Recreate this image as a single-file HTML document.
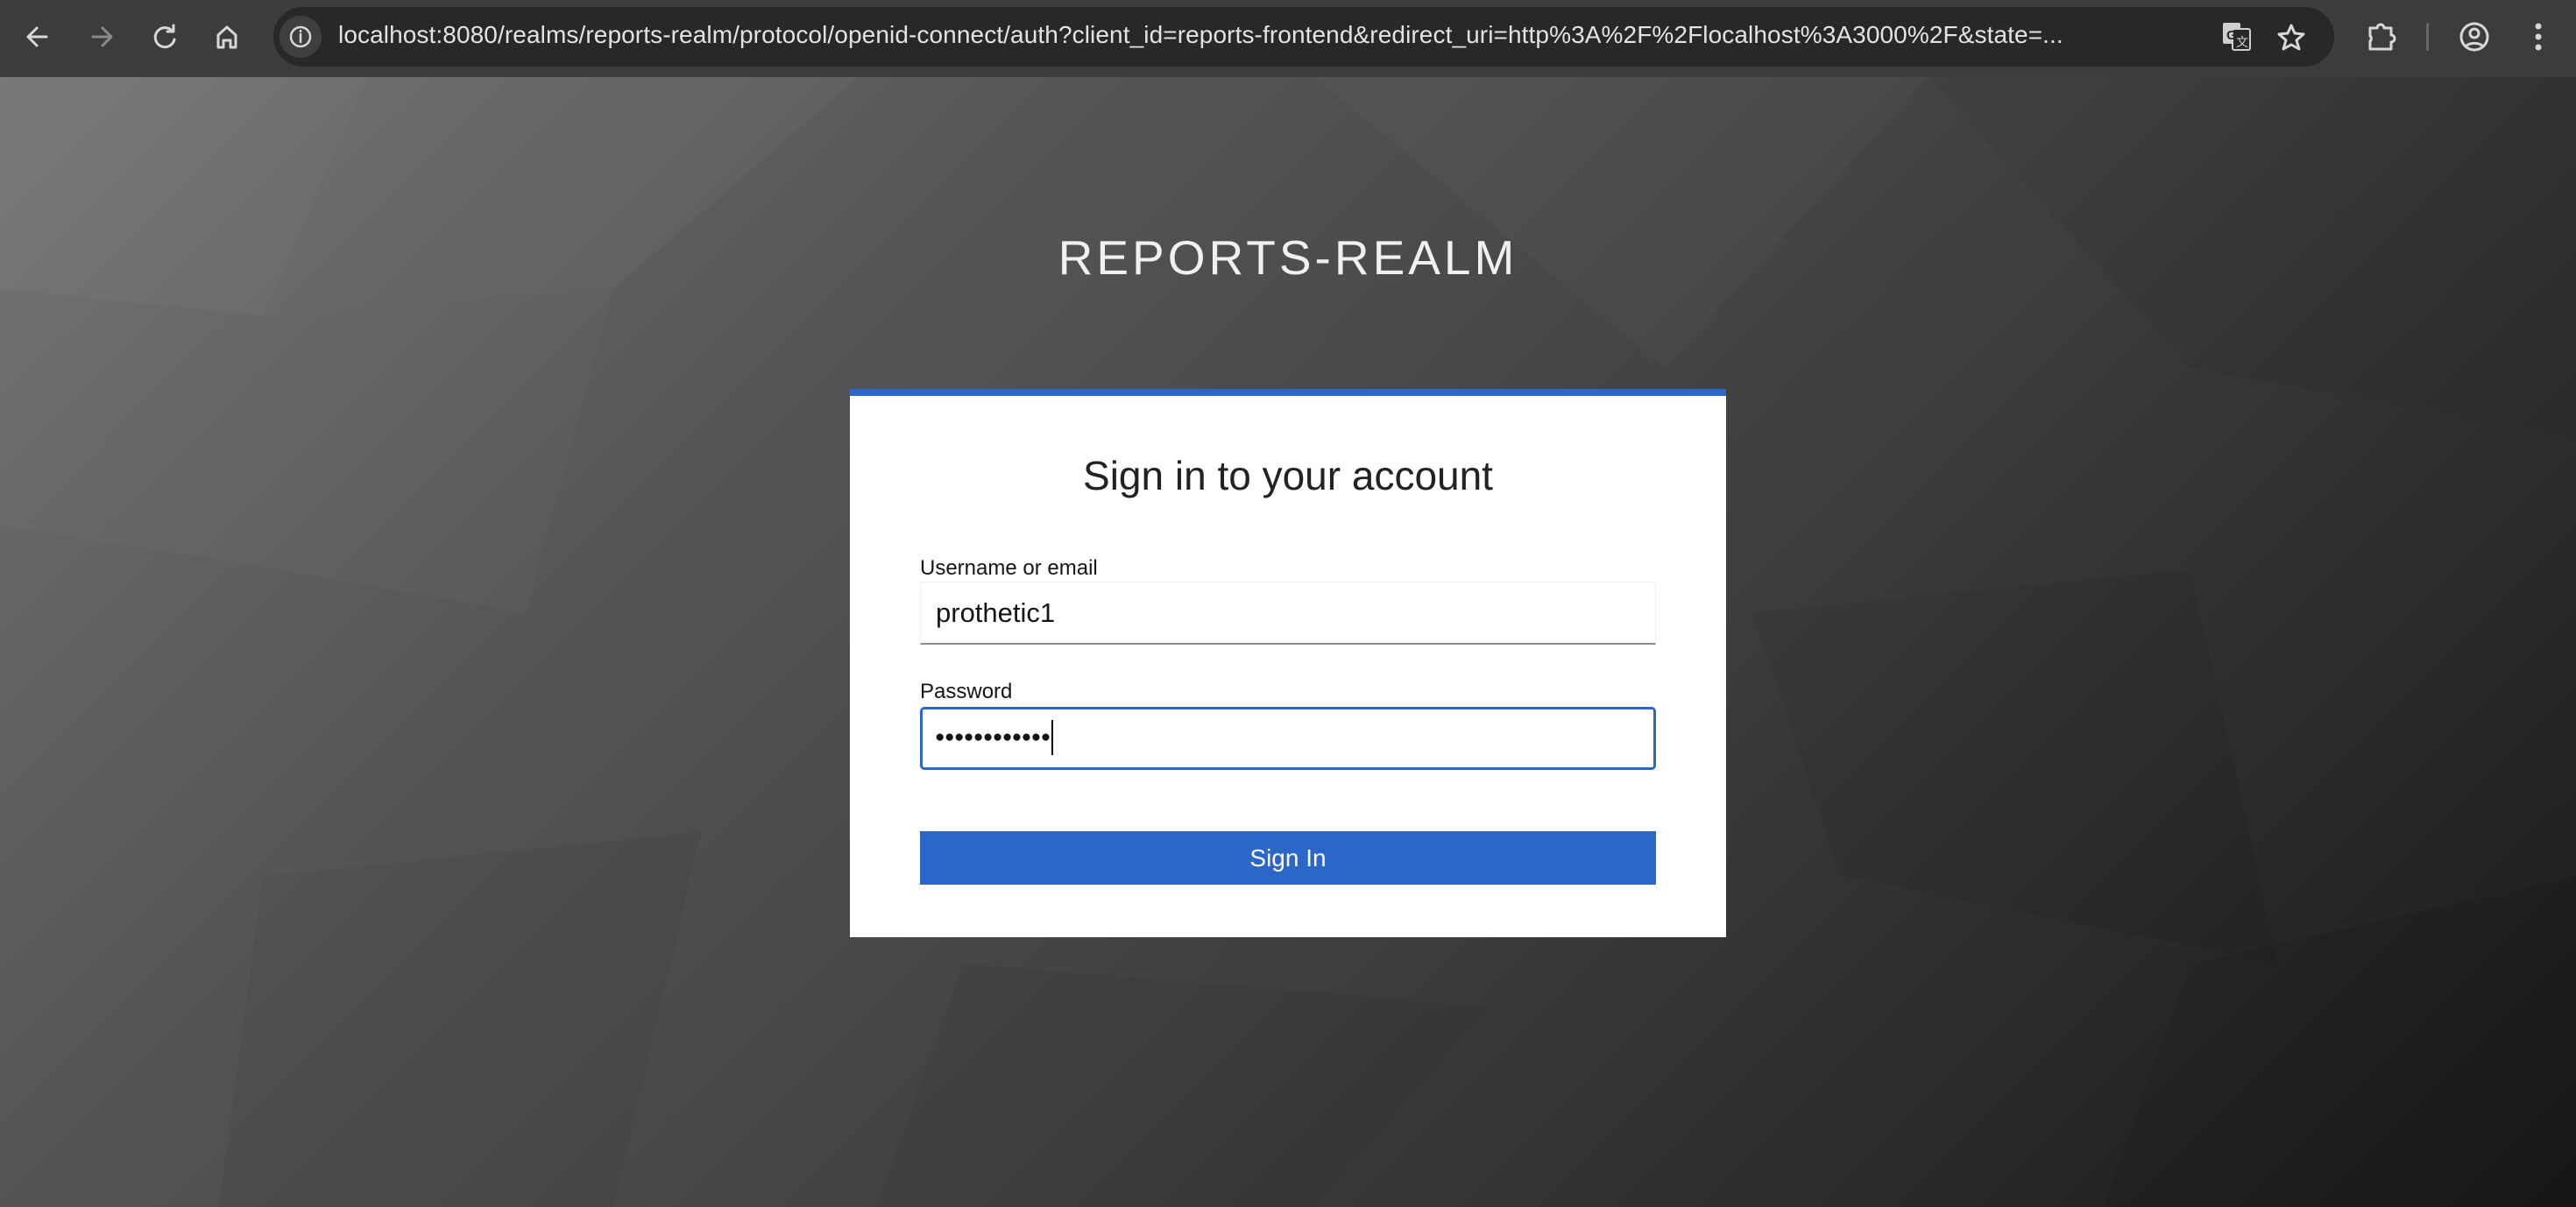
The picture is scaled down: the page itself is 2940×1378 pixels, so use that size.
<!DOCTYPE html>
<html><head><meta charset="utf-8"><style>
*{margin:0;padding:0;box-sizing:border-box}
body{width:2940px;height:1378px;overflow:hidden;font-family:"Liberation Sans",sans-serif;background:#333;position:relative}
.bar{position:absolute;left:0;top:0;width:2940px;height:88px;background:#3c3c3c}
.addr{position:absolute;left:312px;top:8px;width:2352px;height:68px;border-radius:34px;background:#282828}
.url{position:absolute;left:386px;top:24px;font-size:28px;color:#e3e3e3;white-space:nowrap;letter-spacing:0.1px}
.bg{position:absolute;left:0;top:88px;width:2940px;height:1290px;background:linear-gradient(135deg,#727272 0%,#555 30%,#3e3e3e 60%,#181818 100%)}
.title{position:absolute;left:0;width:2940px;top:262px;text-align:center;color:#f0f0f0;font-size:55px;letter-spacing:4px}
.card{position:absolute;left:970px;top:444px;width:1000px;height:626px;background:#fff;border-top:8px solid #2b66c9}
.h{position:absolute;top:64px;width:100%;text-align:center;font-size:46px;color:#222}
.lab{position:absolute;left:80px;font-size:24px;color:#151515}
.inp{position:absolute;left:80px;width:840px;height:72px;font-size:31px;color:#151515;padding-left:17px;line-height:70px}
.btn{position:absolute;left:80px;top:497px;width:840px;height:61px;background:#2b66c9;color:#fff;font-size:28px;text-align:center;line-height:61px}
svg{position:absolute}
</style></head><body>
<div class="bg"></div>
<svg style="left:0;top:88px" width="2940" height="1290" viewBox="0 88 2940 1290">
<g fill="#fff">
<polygon points="0,88 420,88 300,360 0,330" opacity="0.05"/>
<polygon points="420,88 980,88 700,330 300,360" opacity="0.03"/>
<polygon points="0,330 300,360 260,640 0,600" opacity="0.025"/>
<polygon points="1500,88 2200,88 1900,420" opacity="0.025"/>
<polygon points="300,360 700,330 600,700 260,640" opacity="0.02"/>
</g>
<g fill="#000">
<polygon points="2200,88 2940,88 2940,500 2500,420" opacity="0.04"/>
<polygon points="2000,700 2500,650 2600,1100 2100,1000" opacity="0.05"/>
<polygon points="300,1000 800,950 700,1378 250,1378" opacity="0.04"/>
<polygon points="2500,1100 2940,1000 2940,1378 2400,1378" opacity="0.06"/>
<polygon points="1100,1100 1700,1150 1500,1378 1000,1378" opacity="0.04"/>
</g>
</svg>
<div class="bar"></div>
<div class="addr"></div>
<svg style="left:0;top:0" width="2940" height="88">
<g fill="none" stroke="#d8d8d8" stroke-width="3" stroke-linecap="round" stroke-linejoin="round">
<path d="M53 42H33M42 32L32 42L42 52"/>
<path d="M106 42H126M117 32L127 42L117 52" stroke="#8a8a8a"/>
<path d="M197 36A11 11 0 1 0 199 45M198 29V36H191"/>
<path d="M249 40L259 31L269 40V54H263V46H255V54H249Z"/>
<circle cx="343" cy="42" r="24" fill="#3f3f3f" stroke="none"/>
<circle cx="343" cy="42" r="11" stroke-width="2.5"/>
<path d="M343 39V48M343 35V36" stroke-width="2.5"/>
<path d="M2615 29L2619 38L2629 39L2621 46L2624 56L2615 51L2606 56L2609 46L2601 39L2611 38Z" stroke-width="3"/>
<path d="M2705 32H2713A4 4 0 0 1 2721 32H2729V40A4 4 0 0 1 2729 48V56H2705V47A4 4 0 0 0 2705 41Z" stroke-width="3"/>
<circle cx="2824" cy="42" r="15" stroke-width="3"/>
<circle cx="2824" cy="38" r="5" stroke-width="3"/>
<path d="M2814 53A12 8 0 0 1 2834 53" stroke-width="3"/>
</g>
<rect x="2537" y="26" width="20" height="24" rx="2" fill="#cfcfcf"/>
<rect x="2548" y="33" width="20" height="24" rx="2" fill="#282828" stroke="#cfcfcf" stroke-width="2"/>
<text x="2541" y="45" font-size="15" font-weight="bold" fill="#282828" font-family="Liberation Sans">G</text>
<text x="2552" y="53" font-size="14" fill="#cfcfcf" font-family="Liberation Sans">文</text>
<rect x="2769" y="26" width="3" height="32" rx="1.5" fill="#666"/>
<circle cx="2897" cy="30" r="3.5" fill="#d8d8d8"/><circle cx="2897" cy="42" r="3.5" fill="#d8d8d8"/><circle cx="2897" cy="54" r="3.5" fill="#d8d8d8"/>
</svg>
<div class="url">localhost:8080/realms/reports-realm/protocol/openid-connect/auth?client_id=reports-frontend&amp;redirect_uri=http%3A%2F%2Flocalhost%3A3000%2F&amp;state=...</div>
<div class="title">REPORTS-REALM</div>
<div class="card">
<div class="h">Sign in to your account</div>
<div class="lab" style="top:183px">Username or email</div>
<div class="inp" style="top:212px;border:1px solid #f0f0f0;border-bottom:2px solid #8a8d90">prothetic1</div>
<div class="lab" style="top:324px">Password</div>
<div class="inp" style="top:355px;border:3px solid #2b66c9;border-radius:5px;font-size:19px;padding-left:14px;line-height:64px;letter-spacing:-0.5px">●●●●●●●●●●●●<span style="display:inline-block;width:2px;height:40px;background:#000;vertical-align:middle;margin-left:1px"></span></div>
<div class="btn">Sign In</div>
</div>
</body></html>
